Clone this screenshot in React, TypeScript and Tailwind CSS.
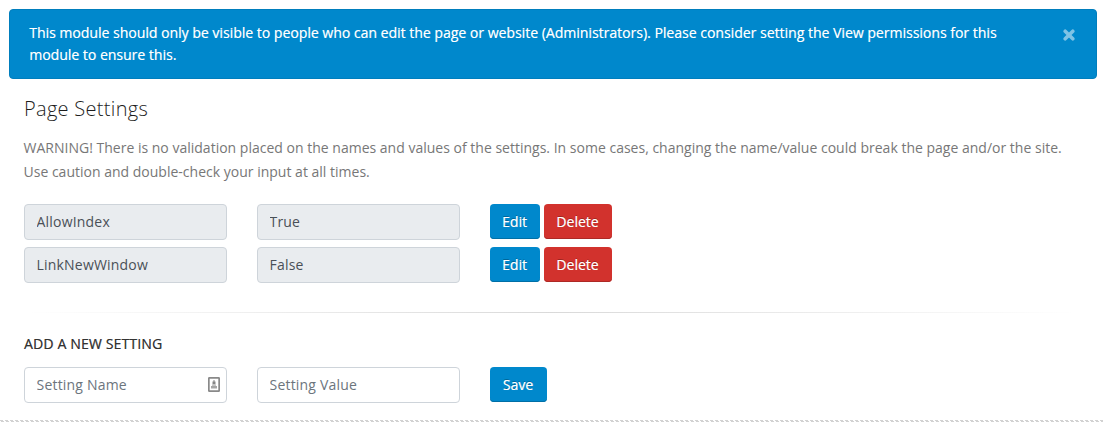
import React from 'react';

const field =
  'block h-9 w-[203px] rounded border border-[#ced4da] px-[11.5px] pb-px text-[14px] tracking-[0.2px] text-[#495057] placeholder:text-[#6c757d] placeholder:opacity-100 outline-none';
const button =
  'h-[35px] rounded pr-px pb-px text-[14px] text-white [text-shadow:0.35px_0_0_rgba(255,255,255,0.5),0_-1px_0_rgba(0,0,0,0.25)]';
const blue = 'bg-[#0088cc] shadow-[inset_0_-1px_0_#006fa6]';
const red = 'bg-[#d2322d] shadow-[inset_0_-1px_0_#ad2925]';

const settings = [
  { name: 'AllowIndex', value: 'True' },
  { name: 'LinkNewWindow', value: 'False' },
];

function CloseIcon() {
  return (
    <svg className="h-3 w-3" viewBox="0 0 12 12" fill="none" stroke="currentColor" strokeWidth="3.6" strokeLinecap="round">
      <path d="M2.200 2.200 9.800 9.800M9.800 2.200 2.200 9.800" />
    </svg>
  );
}

function ContactIcon() {
  return (
    <svg className="h-[15px] w-3" viewBox="0 0 12 15" fill="none">
      <rect x=".85" y=".85" width="10.3" height="13.3" rx=".5" stroke="#898989" strokeWidth="1.7" />
      <path d="M5.500 3h1v1.500H7.500V7.500h-3V4.500h1z" fill="#858585" />
      <path d="M4 7.500h4V9H4z" fill="#c4c4c4" />
      <path d="M3 9h6v2.500H3z" fill="#a5a5a5" />
    </svg>
  );
}

export default function App() {
  return (
    <main className="h-[422px] overflow-hidden bg-white pt-[9px] font-['Open_Sans',sans-serif] text-[14px]">
      <div className="ml-[9px] flex h-[70px] w-[1088px] items-start justify-between rounded border border-[#007ebd] bg-[#0088cc] pt-[12px] pr-[21.5px] pl-[19.2px] text-white">
        <p className="w-[990px] leading-[22px] tracking-[0.008px] [text-shadow:0.35px_0_0_rgba(255,255,255,0.5)]">
          This module should only be visible to people who can edit the page or website (Administrators). Please
          consider setting the View permissions for this module to ensure this.
        </p>
        <button aria-label="Close" className="mt-[7px] text-[#7fc3e5]">
          <CloseIcon />
        </button>
      </div>
      <section className="px-6">
        <h4 className="mt-4 text-[20px] leading-[27px] font-light tracking-[0.3px] text-[#1d1d1d]">Page Settings</h4>
        <p className="mt-[14px] -ml-[0.5px] w-[1050px] leading-6 tracking-[0.006px] text-[#777]">
          WARNING! There is no validation placed on the names and values of the settings. In some cases, changing the
          name/value could break the page and/or the site. Use caution and double-check your input at all times.
        </p>
        <div className="mt-5 flex flex-col gap-[7px]">
          {settings.map((s) => (
            <div key={s.name} className="flex items-start gap-[30px]">
              <input className={`${field} bg-[#e9ecef]`} disabled defaultValue={s.name} />
              <input className={`${field} bg-[#e9ecef]`} disabled defaultValue={s.value} />
              <div className="flex gap-1">
                <button className={`${button} ${blue} w-[50px]`}>Edit</button>
                <button className={`${button} ${red} w-[68px]`}>Delete</button>
              </div>
            </div>
          ))}
        </div>
        <div className="mt-[29px] h-px bg-[linear-gradient(to_right,transparent,rgba(0,0,0,0.15),transparent)]" />
        <h5 className="mt-[22px] leading-[18px] font-normal tracking-[0.15px] text-[#333] [text-shadow:0.35px_0_0_rgba(51,51,51,0.6)]">ADD A NEW SETTING</h5>
        <div className="mt-[14px] flex items-start gap-[30px]">
          <div className="relative">
            <input className={`${field} bg-white`} placeholder="Setting Name" />
            <span className="absolute top-[10px] right-[7px]">
              <ContactIcon />
            </span>
          </div>
          <input className={`${field} bg-white`} placeholder="Setting Value" />
          <button className={`${button} ${blue} w-[57px]`}>Save</button>
        </div>
      </section>
      <div className="mt-[17px]">
        <div className="h-px bg-[repeating-linear-gradient(to_right,#d2d2d2_0_3px,#fff_3px_5px)]" />
        <div className="h-px bg-[repeating-linear-gradient(to_right,#fff_0_1px,#d2d2d2_1px_4px,#fff_4px_5px)]" />
      </div>
    </main>
  );
}
